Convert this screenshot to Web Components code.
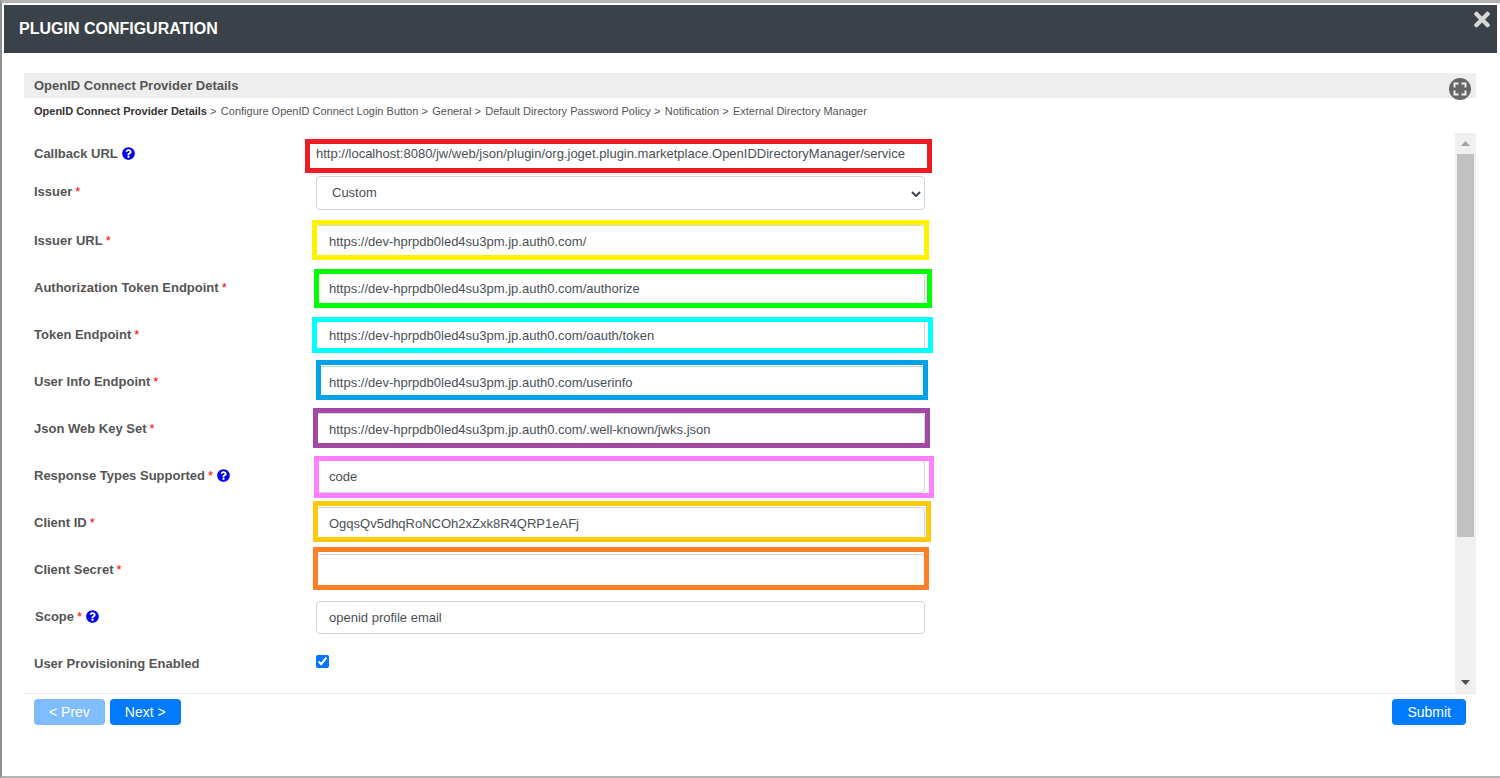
<!DOCTYPE html>
<html lang="en">
<head>
<meta charset="utf-8">
<title>Plugin Configuration</title>
<style>
  html, body { margin: 0; background: #fff; }
  body { font-family: "Liberation Sans", Arial, sans-serif; overflow: hidden; }
</style>
</head>
<body>
<plugin-dialog heading="PLUGIN CONFIGURATION">
  <section-bar>OpenID Connect Provider Details</section-bar>
  <page-trail current="OpenID Connect Provider Details">
    <span>Configure OpenID Connect Login Button</span>
    <span>General</span>
    <span>Default Directory Password Policy</span>
    <span>Notification</span>
    <span>External Directory Manager</span>
  </page-trail>
  <form-pane>
    <form-row label="Callback URL" help gap="13" style="--label-top: 5px"><plain-value>http://localhost:8080/jw/web/json/plugin/org.joget.plugin.marketplace.OpenIDDirectoryManager/service</plain-value></form-row>
    <form-row label="Issuer" required gap="15"><select-field>Custom</select-field></form-row>
    <form-row label="Issuer URL" required><text-field>https://dev-hprpdb0led4su3pm.jp.auth0.com/</text-field></form-row>
    <form-row label="Authorization Token Endpoint" required><text-field>https://dev-hprpdb0led4su3pm.jp.auth0.com/authorize</text-field></form-row>
    <form-row label="Token Endpoint" required><text-field>https://dev-hprpdb0led4su3pm.jp.auth0.com/oauth/token</text-field></form-row>
    <form-row label="User Info Endpoint" required><text-field>https://dev-hprpdb0led4su3pm.jp.auth0.com/userinfo</text-field></form-row>
    <form-row label="Json Web Key Set" required><text-field>https://dev-hprpdb0led4su3pm.jp.auth0.com/.well-known/jwks.json</text-field></form-row>
    <form-row label="Response Types Supported" required help><text-field>code</text-field></form-row>
    <form-row label="Client ID" required><text-field>OgqsQv5dhqRoNCOh2xZxk8R4QRP1eAFj</text-field></form-row>
    <form-row label="Client Secret" required><text-field></text-field></form-row>
    <form-row label="Scope" required help style="--label-left: 1px"><text-field>openid profile email</text-field></form-row>
    <form-row label="User Provisioning Enabled"><check-field></check-field></form-row>

    <!-- hand drawn highlights on top of the screenshot, coordinates are relative to the pane -->
    <mark-box slot="marks" color="#ed1c24" box="281,6,627,34"></mark-box>
    <mark-box slot="marks" color="#fff200" box="288,87,617,40"></mark-box>
    <mark-box slot="marks" color="#00ff00" box="290,136,618,39"></mark-box>
    <mark-box slot="marks" color="#00ffff" box="288,184,621,36"></mark-box>
    <mark-box slot="marks" color="#00a2e8" box="292,227,612,40"></mark-box>
    <mark-box slot="marks" color="#a349a4" box="289,275,617,40"></mark-box>
    <mark-box slot="marks" color="#ff80ff" box="290,323,620,42"></mark-box>
    <mark-box slot="marks" color="#ffc90e" box="289,368,618,41"></mark-box>
    <mark-box slot="marks" color="#ff7f27" box="289,414,616,43"></mark-box>
  </form-pane>
  <wizard-footer>
    <wizard-button disabled>&lt; Prev</wizard-button>
    <wizard-button>Next &gt;</wizard-button>
    <wizard-button slot="end">Submit</wizard-button>
  </wizard-footer>
</plugin-dialog>

<script>
(() => {
  var font = '"Liberation Sans", Arial, sans-serif';

  var define = (name, html, init) => {
    var template = document.createElement("template");
    template.innerHTML = html;
    customElements.define(name, class extends HTMLElement {
      constructor() {
        super();
        this.attachShadow({ mode: "open" }).appendChild(template.content.cloneNode(true));
      }
      connectedCallback() {
        if (init) init(this, this.shadowRoot);
      }
    });
  };

  // dialog frame
  define("plugin-dialog", `
    <style>
      :host {
        display: flex;
        flex-direction: column;
        box-sizing: border-box;
        width: 1500px;
        height: 778px;
        padding: 2px 3px 0 2px;
        border-top: 3px solid #b4b4b4;
        border-left: 2px solid #8f8f8f;
        border-bottom: 2px solid #b4b4b4;
        background: #fff;
        font-family: ${font};
      }
      header {
        display: flex;
        align-items: center;
        justify-content: space-between;
        flex: none;
        height: 48px;
        padding: 0 7px 0 15px;
        background: #3b4149;
      }
      h1 {
        margin: 0;
        color: #fff;
        font-size: 16px;
        font-weight: 700;
      }
      svg { align-self: flex-start; margin-top: 3px; width: 16px; height: 23px; fill: #d8d8d8; }
      main { display: flex; flex-direction: column; padding: 20px 21px 0 20px; }
    </style>
    <header>
      <h1></h1>
      <svg viewBox="0 0 352 512"><path d="M242.72 256l100.07-100.07c12.28-12.28 12.28-32.19 0-44.48l-22.24-22.24c-12.28-12.28-32.19-12.28-44.48 0L176 189.28 75.93 89.21c-12.28-12.28-32.19-12.28-44.48 0L9.21 111.45c-12.28 12.28-12.28 32.19 0 44.48L109.28 256 9.21 356.07c-12.28 12.28-12.28 32.19 0 44.48l22.24 22.24c12.28 12.28 32.2 12.28 44.48 0L176 322.72l100.07 100.07c12.28 12.28 32.2 12.28 44.48 0l22.24-22.24c12.28-12.28 12.28-32.19 0-44.48L242.72 256z"/></svg>
    </header>
    <main><slot></slot></main>
  `, (el, root) => {
    root.querySelector("h1").textContent = el.getAttribute("heading");
  });

  define("section-bar", `
    <style>
      :host {
        display: block;
        position: relative;
        height: 25px;
        padding-left: 10px;
        background: #eee;
        color: #555;
        font-size: 13px;
        font-weight: 700;
        line-height: 25px;
      }
      svg { position: absolute; right: 5px; top: 5px; width: 22px; height: 22px; }
    </style>
    <slot></slot>
    <svg viewBox="0 0 22 22">
      <circle cx="11" cy="11" r="11" fill="#666"/>
      <path d="M5.5 9.5v-4h4M12.5 5.5h4v4M16.5 12.5v4h-4M9.5 16.5h-4v-4" fill="none" stroke="#f0f0f0" stroke-width="2"/>
    </svg>
  `);

  // breadcrumb of the wizard pages
  define("page-trail", `
    <style>
      :host {
        display: block;
        height: 35px;
        padding-left: 10px;
        color: #555;
        font-size: 11px;
        line-height: 26px;
        white-space: nowrap;
      }
      b { color: #333; }
      ::slotted(span)::before { content: " > "; margin-right: 1.3px; }
    </style>
    <b></b>
    <slot></slot>
  `, (el, root) => {
    root.querySelector("b").textContent = el.getAttribute("current");
  });

  define("form-pane", `
    <style>
      :host {
        display: flex;
        position: relative;
        height: 560px;
        overflow: hidden;
      }
      .rows {
        flex: 1;
        box-sizing: border-box;
        padding: 6px 0 0 10px;
      }
      .bar {
        display: flex;
        flex-direction: column;
        flex: none;
        width: 21px;
        background: #f0f0f0;
      }
      .arrow {
        display: flex;
        align-items: center;
        justify-content: center;
        flex: none;
        height: 21px;
      }
      .arrow svg { width: 9px; height: 5px; }
      .thumb { flex: none; height: 383px; margin: 0 2px; background: #c1c1c1; }
      .rest { flex: 1; }
    </style>
    <div class="rows"><slot></slot></div>
    <div class="bar">
      <div class="arrow"><svg viewBox="0 0 9 5"><path d="M4.5 0L9 5H0z" fill="#a3a3a3"/></svg></div>
      <div class="thumb"></div>
      <div class="rest"></div>
      <div class="arrow"><svg viewBox="0 0 9 5"><path d="M0 0h9L4.5 5z" fill="#505050"/></svg></div>
    </div>
    <slot name="marks"></slot>
  `);

  define("form-row", `
    <style>
      :host {
        display: grid;
        grid-template-columns: 282px 609px;
        color: #555;
      }
      label {
        display: flex;
        align-items: center;
        align-self: start;
        height: 18px;
        margin-top: var(--label-top, 6px);
        margin-left: var(--label-left, 0);
        font-size: 13px;
        font-weight: 700;
      }
      i { margin-left: 3px; color: #f00; font-style: normal; font-weight: 400; }
      svg { width: 13px; height: 13px; margin-left: 4px; fill: #00e; }
    </style>
    <label><span></span></label>
    <div><slot></slot></div>
  `, (el, root) => {
    var label = root.querySelector("label");
    root.querySelector("span").textContent = el.getAttribute("label");
    if (el.hasAttribute("required")) {
      label.insertAdjacentHTML("beforeend", "<i>*</i>");
    }
    if (el.hasAttribute("help")) {
      label.insertAdjacentHTML("beforeend", `<svg viewBox="0 0 512 512"><path d="M504 256c0 136.997-111.043 248-248 248S8 392.997 8 256C8 119.083 119.043 8 256 8s248 111.083 248 248zM262.655 90c-54.497 0-89.255 22.957-116.549 63.758-3.536 5.286-2.353 12.415 2.715 16.258l34.699 26.31c5.205 3.947 12.621 3.008 16.665-2.122 17.864-22.658 30.113-35.797 57.303-35.797 20.429 0 45.698 13.148 45.698 32.958 0 14.976-12.363 22.667-32.534 33.976C247.128 238.528 216 254.941 216 296v4c0 6.627 5.373 12 12 12h56c6.627 0 12-5.373 12-12v-1.333c0-28.462 83.186-29.647 83.186-106.667 0-58.002-60.165-102-116.531-102zM256 338c-25.365 0-46 20.635-46 46 0 25.364 20.635 46 46 46s46-20.636 46-46c0-25.365-20.635-46-46-46z"/></svg>`);
    }
    el.style.marginBottom = (el.getAttribute("gap") || 14) + "px";
  });

  define("plain-value", `
    <style>
      :host {
        display: block;
        padding-top: 6px;
        color: #495057;
        font-size: 13px;
        line-height: 18px;
        white-space: nowrap;
      }
    </style>
    <slot></slot>
  `);

  define("text-field", `
    <style>
      :host {
        display: block;
        box-sizing: border-box;
        height: 33px;
        padding: 0 12px;
        border: 1px solid #ced4da;
        border-radius: 4px;
        background: #fff;
        color: #495057;
        font-size: 13px;
        line-height: 31px;
        white-space: nowrap;
      }
    </style>
    <slot></slot>
  `);

  define("select-field", `
    <style>
      :host {
        display: flex;
        align-items: center;
        justify-content: space-between;
        box-sizing: border-box;
        height: 34px;
        padding: 0 3px 1px 15px;
        border: 1px solid #ced4da;
        border-radius: 4px;
        background: #fff;
        color: #495057;
        font-size: 13px;
      }
      svg { width: 10px; height: 6px; margin-top: 2px; fill: none; stroke: #3c4450; stroke-width: 2; }
    </style>
    <slot></slot>
    <svg viewBox="0 0 10 6"><path d="M1 1l4 4 4-4"/></svg>
  `);

  define("check-field", `
    <style>
      :host { display: block; padding-top: 7px; line-height: 0; }
      input { width: 13px; height: 13px; margin: 0; accent-color: #0075ff; }
    </style>
    <input type="checkbox" checked aria-label="User Provisioning Enabled">
  `);

  // paint-style rectangle over the form
  define("mark-box", `
    <style>
      :host {
        position: absolute;
        box-sizing: border-box;
        border: 5px solid;
        pointer-events: none;
      }
    </style>
  `, (el) => {
    var [left, top, width, height] = el.getAttribute("box").split(",");
    el.style.cssText = `left:${left}px;top:${top}px;width:${width}px;height:${height}px;border-color:${el.getAttribute("color")}`;
  });

  define("wizard-footer", `
    <style>
      :host {
        display: flex;
        gap: 5px;
        padding: 5px 10px 0;
        border-top: 1px solid #e9ecef;
      }
      .end { margin-left: auto; }
    </style>
    <slot></slot>
    <div class="end"><slot name="end"></slot></div>
  `);

  define("wizard-button", `
    <style>
      :host { display: block; }
      button {
        display: block;
        height: 26px;
        padding: 0 15px;
        border: 0;
        border-radius: 4px;
        background: #007bff;
        color: #fff;
        font: 14px ${font};
      }
      button:disabled { background: #80bdff; color: #fff; }
    </style>
    <button><slot></slot></button>
  `, (el, root) => {
    root.querySelector("button").disabled = el.hasAttribute("disabled");
  });
})();
</script>
</body>
</html>
